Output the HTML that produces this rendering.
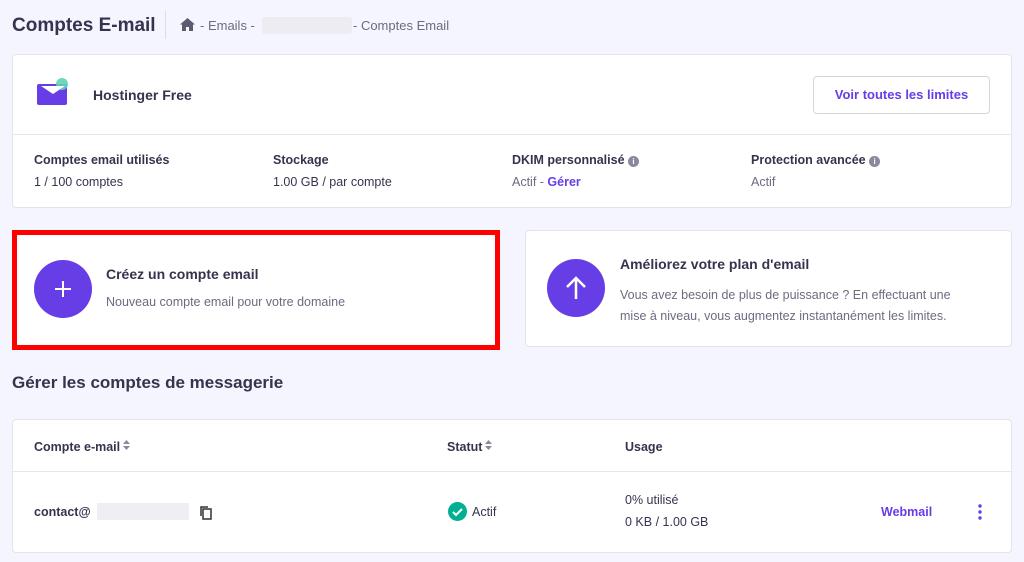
<!DOCTYPE html><html><head><meta charset="utf-8"><style>
*{box-sizing:border-box;margin:0;padding:0}
body{width:1024px;height:562px;background:#f4f5fe;font-family:"Liberation Sans",sans-serif;color:#2f1c6a;position:relative;overflow:hidden}
.a{position:absolute}
.card{position:absolute;background:#fff;border:1px solid #e3e3ea;border-radius:4px}
.t{color:#36344d}
.g{color:#6d6b80}
.b{font-weight:bold}
.s{display:inline-block;vertical-align:1px;margin-left:3px}
</style></head><body>
<div class="a b t" style="left:12px;top:15px;font-size:19px">Comptes E-mail</div>
<div class="a" style="left:165px;top:11px;width:1px;height:28px;background:#dcdce4"></div>
<svg class="a" style="left:180px;top:18px" width="15" height="13" viewBox="0 0 15 13"><path d="M7.5 0L0 6.5h2V13h4V9h3v4h4V6.5h2z" fill="#5c5a70"/></svg>
<div class="a g" style="left:200px;top:18px;font-size:13px">- Emails -</div>
<div class="a" style="left:262px;top:17px;width:90px;height:17px;background:#ececf2;border-radius:3px"></div>
<div class="a g" style="left:353px;top:18px;font-size:13px">- Comptes Email</div>

<div class="card" style="left:12px;top:54px;width:1000px;height:154px"></div>
<svg class="a" style="left:36px;top:78px" width="34" height="28" viewBox="0 0 34 28"><rect x="1" y="6" width="30" height="21" rx="2" fill="#673de6"/><circle cx="26" cy="6" r="6" fill="#5ed3b6" opacity=".9"/><path d="M5 8l12 8 12-8z" fill="#fff"/></svg>
<div class="a b t" style="left:93px;top:87px;font-size:14px">Hostinger Free</div>
<div class="a b" style="left:813px;top:76px;width:177px;height:38px;border:1px solid #d5d5e0;border-radius:4px;color:#673de6;font-size:13px;text-align:center;line-height:36px">Voir toutes les limites</div>
<div class="a" style="left:13px;top:134px;width:998px;height:1px;background:#e6e6ec"></div>
<div class="a b t" style="left:34px;top:153px;font-size:12.5px">Comptes email utilisés</div>
<div class="a t" style="left:34px;top:175px;font-size:12.5px">1 / 100 comptes</div>
<div class="a b t" style="left:273px;top:153px;font-size:12.5px">Stockage</div>
<div class="a t" style="left:273px;top:175px;font-size:12.5px">1.00 GB / par compte</div>
<div class="a b t" style="left:512px;top:153px;font-size:12.5px">DKIM personnalisé <span style="display:inline-block;width:11px;height:11px;border-radius:50%;background:#8a889c;color:#fff;font-size:8px;text-align:center;line-height:11px;vertical-align:0">i</span></div>
<div class="a g" style="left:512px;top:175px;font-size:12.5px">Actif - <b style="color:#673de6">Gérer</b></div>
<div class="a b t" style="left:751px;top:153px;font-size:12.5px">Protection avancée <span style="display:inline-block;width:11px;height:11px;border-radius:50%;background:#8a889c;color:#fff;font-size:8px;text-align:center;line-height:11px;vertical-align:0">i</span></div>
<div class="a g" style="left:751px;top:175px;font-size:12.5px">Actif</div>

<div class="a" style="left:12px;top:230px;width:488px;height:120px;border:5px solid #f00;background:#fff"></div>
<div class="a" style="left:34px;top:260px;width:58px;height:58px;border-radius:50%;background:#673de6"></div>
<svg class="a" style="left:54px;top:280px" width="18" height="18" viewBox="0 0 18 18"><path d="M9 1v16M1 9h16" stroke="#fff" stroke-width="2"/></svg>
<div class="a b t" style="left:106px;top:266px;font-size:14px">Créez un compte email</div>
<div class="a g" style="left:106px;top:295px;font-size:12.5px">Nouveau compte email pour votre domaine</div>

<div class="card" style="left:525px;top:230px;width:487px;height:117px"></div>
<svg class="a" style="left:547px;top:259px" width="58" height="58" viewBox="0 0 58 58"><circle cx="29" cy="29" r="29" fill="#673de6"/><path d="M29 40V19M20 28l9-9 9 9" stroke="#fff" stroke-width="2.5" fill="none"/></svg>
<div class="a b t" style="left:620px;top:256px;font-size:14px">Améliorez votre plan d'email</div>
<div class="a g" style="left:620px;top:285px;font-size:12.5px;line-height:21px;width:360px">Vous avez besoin de plus de puissance ? En effectuant une mise à niveau, vous augmentez instantanément les limites.</div>

<div class="a b t" style="left:12px;top:373px;font-size:17px">Gérer les comptes de messagerie</div>

<div class="card" style="left:12px;top:419px;width:1000px;height:134px"></div>
<div class="a b t" style="left:34px;top:440px;font-size:12.5px">Compte e-mail<svg class="s" width="7" height="10" viewBox="0 0 7 10"><path d="M0 4l3.5-4 3.5 4zM0 6l3.5 4 3.5-4z" fill="#8a889c"/></svg></div>
<div class="a b t" style="left:447px;top:440px;font-size:12.5px">Statut<svg class="s" width="7" height="10" viewBox="0 0 7 10"><path d="M0 4l3.5-4 3.5 4zM0 6l3.5 4 3.5-4z" fill="#8a889c"/></svg></div>
<div class="a b t" style="left:625px;top:440px;font-size:12.5px">Usage</div>
<div class="a" style="left:13px;top:471px;width:998px;height:1px;background:#e6e6ec"></div>
<div class="a b t" style="left:34px;top:505px;font-size:12.5px">contact@</div>
<div class="a" style="left:97px;top:503px;width:92px;height:17px;background:#efeff3"></div>
<svg class="a" style="left:199px;top:505px" width="14" height="16" viewBox="0 0 14 16"><rect x="4" y="4" width="8" height="10" fill="none" stroke="#333" stroke-width="1.5"/><path d="M2 11V2h7" fill="none" stroke="#333" stroke-width="1.5"/></svg>
<svg class="a" style="left:448px;top:502px" width="19" height="19" viewBox="0 0 19 19"><circle cx="9.5" cy="9.5" r="9.5" fill="#00b090"/><path d="M5 10l3 3 6-6" stroke="#fff" stroke-width="2" fill="none"/></svg>
<div class="a t" style="left:472px;top:505px;font-size:12.5px">Actif</div>
<div class="a t" style="left:625px;top:493px;font-size:12.5px">0% utilisé</div>
<div class="a t" style="left:625px;top:515px;font-size:12.5px">0 KB / 1.00 GB</div>
<div class="a b" style="left:881px;top:505px;font-size:12.5px;color:#673de6">Webmail</div>
<svg class="a" style="left:977px;top:503px" width="6" height="18" viewBox="0 0 6 18"><circle cx="3" cy="3" r="1.7" fill="#673de6"/><circle cx="3" cy="9" r="1.7" fill="#673de6"/><circle cx="3" cy="15" r="1.7" fill="#673de6"/></svg>
</body></html>
